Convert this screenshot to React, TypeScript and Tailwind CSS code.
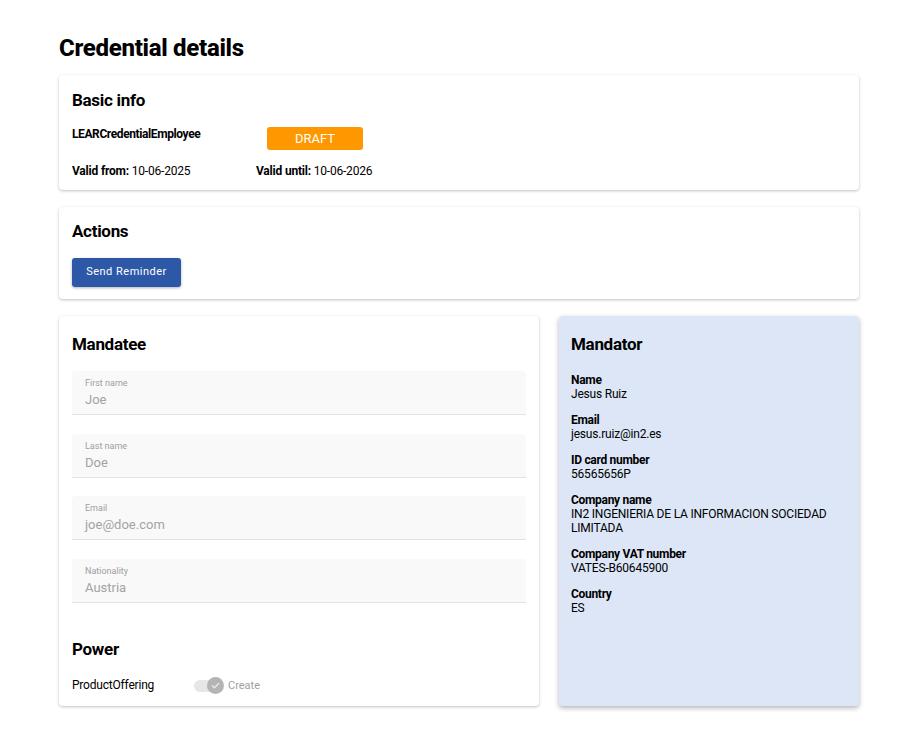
const font = { fontFamily: "Roboto, 'Noto Sans', sans-serif" };

const Field = ({ label, value }: { label: string; value: string }) => (
  <div className="h-[44px] rounded-t-[4px] border-b border-[#e2e2e2] bg-[#f9f9f9] px-[13px] pt-[6px]">
    <div className="text-[9px] leading-[12px] text-[#9e9e9e]">{label}</div>
    <div className="mt-[3px] text-[13px] leading-[16px] text-[#a3a3a3]">{value}</div>
  </div>
);

const Info = ({ label, children }: { label: string; children: React.ReactNode }) => (
  <div className="mb-[12px]">
    <div className="text-[12px] font-bold leading-[14px] tracking-[-0.3px] text-black">{label}</div>
    <div className="text-[12px] leading-[14px] tracking-[-0.2px] text-black">{children}</div>
  </div>
);

const Card = ({ children, className = "" }: { children: React.ReactNode; className?: string }) => (
  <div className={"rounded-[4px] bg-white shadow-[0_1px_3px_rgba(0,0,0,0.25)] " + className}>{children}</div>
);

export default function App() {
  return (
    <div style={font} className="min-h-screen bg-white px-[59px] pb-[40px] pt-[33px] text-black">
      <div className="w-[800px]">
        <h1 className="text-[24px] font-extrabold leading-[30px] tracking-[-0.3px]">Credential details</h1>

        <Card className="mt-[12px] px-[13px] pb-[11px] pt-[14px]">
          <h2 className="text-[17px] font-bold leading-[22px] tracking-[-0.3px]">Basic info</h2>
          <div className="mt-[15px] flex items-start">
            <div className="w-[195px] pt-[1px] text-[12px] font-bold leading-[14px] tracking-[-0.4px]">LEARCredentialEmployee</div>
            <div className="mt-[1px] flex h-[23px] w-[96px] items-center justify-center rounded-[3px] bg-[#ff9800] text-[13px] text-white">DRAFT</div>
          </div>
          <div className="mt-[13px] flex text-[12px] leading-[16px] tracking-[-0.2px]">
            <div className="w-[184px]">
              <span className="font-bold">Valid from:</span> 10-06-2025
            </div>
            <div>
              <span className="font-bold">Valid until:</span> 10-06-2026
            </div>
          </div>
        </Card>

        <Card className="mt-[17px] px-[13px] pb-[12px] pt-[13px]">
          <h2 className="text-[17px] font-bold leading-[22px] tracking-[-0.3px]">Actions</h2>
          <button className="mt-[16px] h-[29px] w-[109px] rounded-[3px] bg-[#2d58a8] text-[11px] tracking-[0.5px] text-white shadow-[0_1px_3px_rgba(0,0,0,0.3)]">
            Send Reminder
          </button>
        </Card>

        <div className="mt-[17px] flex gap-[20px]">
          <Card className="w-[480px] px-[13px] pb-[11px] pt-[17px]">
            <h2 className="text-[17px] font-bold leading-[22px] tracking-[-0.3px]">Mandatee</h2>
            <div className="mt-[16px] flex flex-col gap-[18.7px]">
              <Field label="First name" value="Joe" />
              <Field label="Last name" value="Doe" />
              <Field label="Email" value="joe@doe.com" />
              <Field label="Nationality" value="Austria" />
            </div>
            <h2 className="mt-[35px] text-[17px] font-bold leading-[22px] tracking-[-0.3px]">Power</h2>
            <div className="mt-[16px] flex items-center">
              <div className="w-[122px] text-[12px] tracking-[-0.2px]">ProductOffering</div>
              <div className="relative mt-[2px] h-[12px] w-[28px] rounded-full bg-[#e6e6e6]">
                <div className="absolute right-[-2px] top-[-3px] flex h-[17px] w-[17px] items-center justify-center rounded-full bg-[#b4b4b4]">
                  <svg width="11" height="11" viewBox="0 0 24 24" fill="none" stroke="#e8e8e8" strokeWidth="3" strokeLinecap="round" strokeLinejoin="round">
                    <path d="M5 12.5l4.5 4.5L19 7.5" />
                  </svg>
                </div>
              </div>
              <span className="ml-[6px] mt-[2px] text-[11px] text-[#a0a0a0]">Create</span>
            </div>
          </Card>

          <div className="w-[300px] rounded-[4px] bg-[#dce6f7] px-[12px] pt-[17px] shadow-[0_2px_5px_rgba(0,0,0,0.3)]">
            <h2 className="text-[17px] font-bold leading-[22px] tracking-[-0.3px]">Mandator</h2>
            <div className="mt-[18px]">
              <Info label="Name">Jesus Ruiz</Info>
              <Info label="Email">jesus.ruiz@in2.es</Info>
              <Info label="ID card number">56565656P</Info>
              <Info label="Company name">IN2 INGENIERIA DE LA INFORMACION SOCIEDAD LIMITADA</Info>
              <Info label="Company VAT number">VATES-B60645900</Info>
              <Info label="Country">ES</Info>
            </div>
          </div>
        </div>
      </div>
    </div>
  );
}
